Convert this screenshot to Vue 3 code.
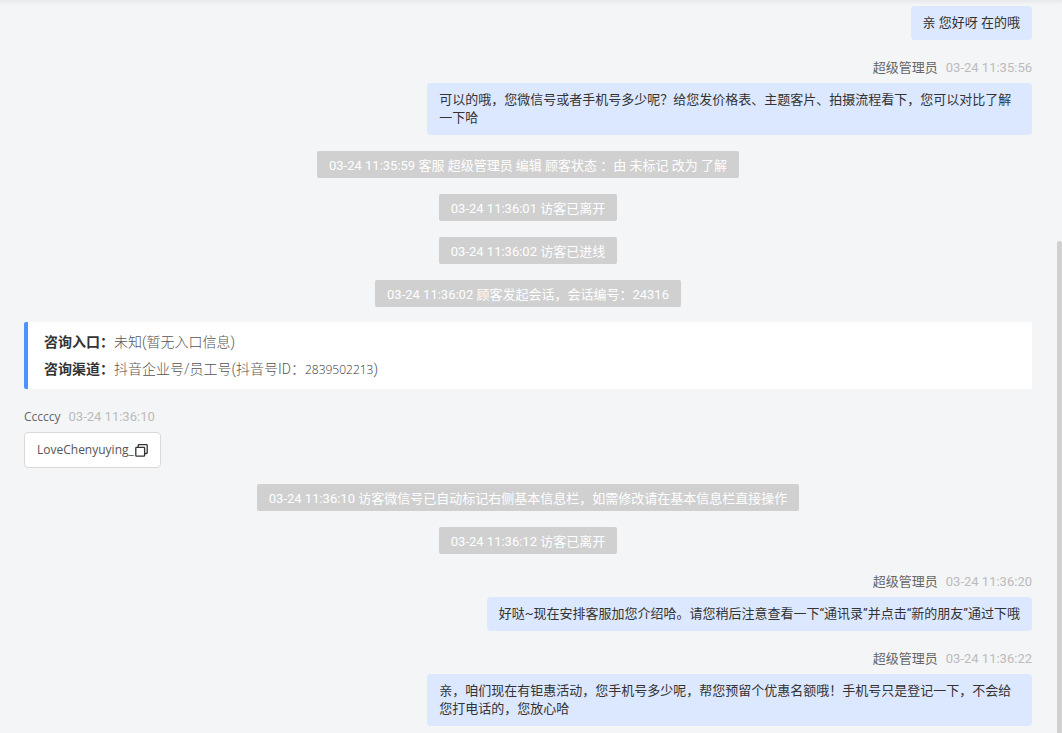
<script setup>
const items = [
  { type: 'out', text: '亲 您好呀 在的哦' },
  { type: 'out', name: '超级管理员', time: '03-24 11:35:56', text: '可以的哦，您微信号或者手机号多少呢？给您发价格表、主题客片、拍摄流程看下，您可以对比了解一下哈' },
  { type: 'note', text: '03-24 11:35:59 客服 超级管理员 编辑 顾客状态 ：由 未标记 改为 了解' },
  { type: 'note', text: '03-24 11:36:01 访客已离开' },
  { type: 'note', text: '03-24 11:36:02 访客已进线' },
  { type: 'note', text: '03-24 11:36:02 顾客发起会话，会话编号：24316' },
  { type: 'card' },
  { type: 'in', name: 'Cccccy', time: '03-24 11:36:10', text: 'LoveChenyuying_' },
  { type: 'note', text: '03-24 11:36:10 访客微信号已自动标记右侧基本信息栏，如需修改请在基本信息栏直接操作' },
  { type: 'note', text: '03-24 11:36:12 访客已离开' },
  { type: 'out', name: '超级管理员', time: '03-24 11:36:20', text: '好哒~现在安排客服加您介绍哈。请您稍后注意查看一下“通讯录”并点击“新的朋友”通过下哦' },
  { type: 'out', name: '超级管理员', time: '03-24 11:36:22', text: '亲，咱们现在有钜惠活动，您手机号多少呢，帮您预留个优惠名额哦！手机号只是登记一下，不会给您打电话的，您放心哈' },
]
</script>

<template>
  <main class="chat">
    <div class="top-shadow"></div>
    <section class="list">
      <template v-for="(m, i) in items" :key="i">
        <p v-if="m.type === 'note'" class="note">{{ m.text }}</p>
        <dl v-else-if="m.type === 'card'" class="card">
          <div class="row"><dt>咨询入口：</dt><dd>未知(暂无入口信息)</dd></div>
          <div class="row"><dt>咨询渠道：</dt><dd>抖音企业号/员工号(抖音号ID：<span class="id">2839502213</span>)</dd></div>
        </dl>
        <article v-else class="message" :class="m.type">
          <header v-if="m.name" class="meta">
            <span class="name">{{ m.name }}</span>
            <time class="time">{{ m.time }}</time>
          </header>
          <div class="bubble">
            <span>{{ m.text }}</span>
            <button v-if="m.type === 'in'" class="copy" type="button" aria-label="复制">
              <svg viewBox="0 0 13 13" width="13" height="13" fill="none" stroke="#333" stroke-width="1.3">
                <rect x="0.8" y="3.3" width="8.8" height="8.8" rx="0.7" />
                <path d="M3.2 3.2V1.4q0-.7.7-.7h7.6q.7 0 .7.7v7.4q0 .7-.7.7H9.8" />
              </svg>
            </button>
          </div>
        </article>
      </template>
    </section>
    <div class="scroll-thumb"></div>
  </main>
</template>

<style>
body {
  background: #f3f5f7;
}
</style>

<style scoped>
.chat {
  position: relative;
  height: 100vh;
  overflow: hidden;
  background: #f3f5f7;
  color: #333;
  font: 13px/18px Roboto, "Noto Sans CJK SC", sans-serif;
}
.top-shadow {
  position: absolute;
  top: 0;
  left: 0;
  right: 0;
  height: 5px;
  background: linear-gradient(#e6e8ea, #f3f5f7);
}
.list {
  position: relative;
  display: flex;
  flex-direction: column;
  align-items: center;
  gap: 16px;
  padding: 6px 30px 16px 24px;
}
.note {
  margin: 0;
  padding: 3px 12px 0;
  border-radius: 2px;
  background: #d0d0d0;
  color: #fff;
  line-height: 24px;
}
.card {
  align-self: stretch;
  margin: -1px 0 0;
  padding: 7px 16px 6px;
  border-left: 4px solid #4e92ff;
  border-radius: 2px 0 0 2px;
  background: #fff;
  font-size: 14px;
  line-height: 27px;
}
.row {
  display: flex;
}
dt {
  font-weight: 700;
}
dd {
  margin: 0;
  color: #555;
  font-weight: 300;
}
.id {
  color: #333;
  font-family: "Open Sans", sans-serif;
  font-size: 12px;
}
.message {
  align-self: stretch;
  display: flex;
  flex-direction: column;
  align-items: flex-end;
}
.in {
  align-items: flex-start;
}
.meta {
  display: flex;
  gap: 8px;
  padding-top: 1px;
  margin-bottom: 4px;
  line-height: 22px;
}
.name {
  color: #666;
}
.time {
  color: #bbb;
}
.in .name {
  font-family: "Open Sans", sans-serif;
  font-size: 12px;
}
.bubble {
  box-sizing: border-box;
  max-width: 60%;
  padding: 8px 12px;
  border-radius: 4px;
  background: #dce8ff;
}
.in .bubble {
  display: flex;
  align-items: center;
  gap: 1px;
  border: 1px solid #d9d9d9;
  background: #fff;
  color: #555;
  font-family: "Open Sans", sans-serif;
  font-size: 12px;
}
.copy {
  display: flex;
  padding: 0;
  border: 0;
  background: none;
}
.scroll-thumb {
  position: absolute;
  top: 241px;
  right: 0;
  bottom: 0;
  width: 5px;
  border-radius: 3px 3px 0 0;
  background: #d0d0d0;
}
</style>
